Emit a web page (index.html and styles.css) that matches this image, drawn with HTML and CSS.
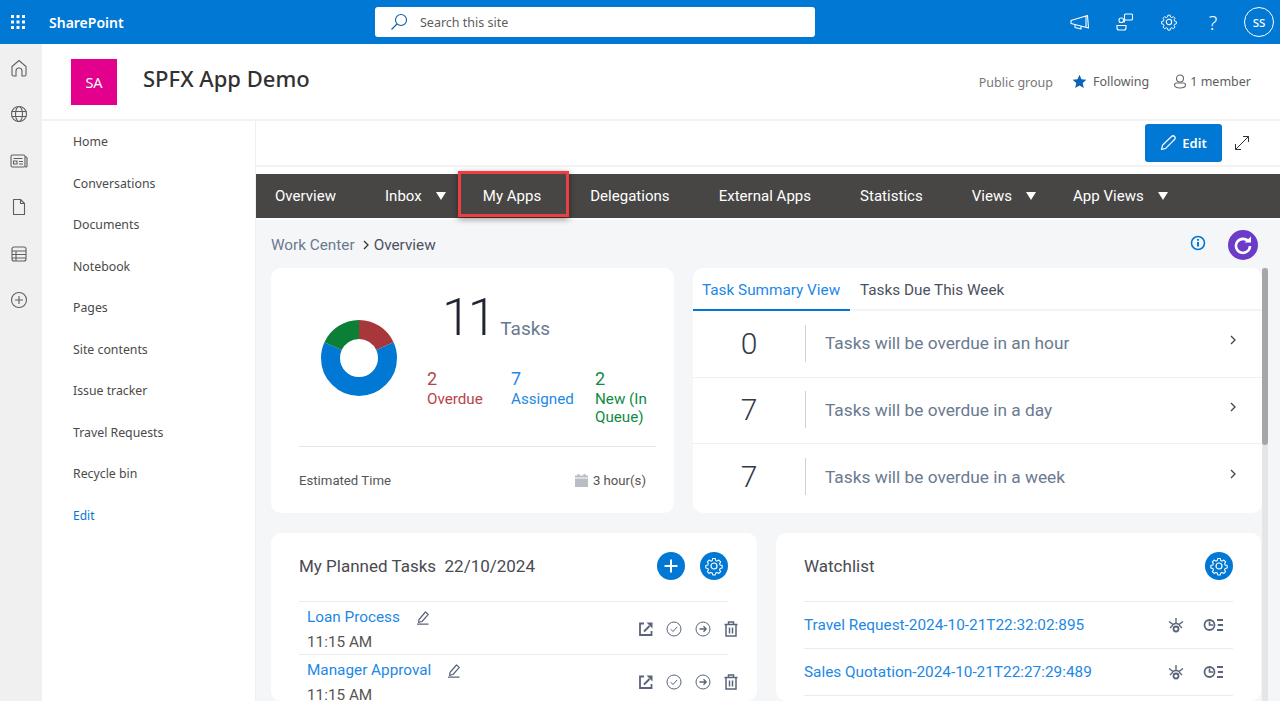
FILE: index.html
```html
<!DOCTYPE html>
<html lang="en">
<head>
<meta charset="utf-8">
<title>SPFX App Demo</title>
<link rel="stylesheet" href="styles.css">
</head>
<body>
<svg class="defs" width="0" height="0" aria-hidden="true">
  <symbol id="i-gear" viewBox="0 0 20 20"><path d="M8.600 1.600h2.800l.5 2.300 1.500.7 2-1.200 2 2-1.200 2 .6 1.500 2.300.6v2.800l-2.300.5-.6 1.500 1.200 2-2 2-2-1.200-1.500.6-.5 2.300H8.600l-.5-2.300-1.500-.6-2 1.200-2-2 1.200-2-.6-1.500-2.300-.5V9.500l2.300-.6.6-1.500-1.200-2 2-2 2 1.200 1.500-.7z" transform="translate(1 1) scale(.9)" fill="none" stroke="currentColor" stroke-width="1.200" stroke-linejoin="round"/><circle cx="10" cy="10" r="3" fill="none" stroke="currentColor" stroke-width="1.200"/></symbol>
  <symbol id="i-ext" viewBox="0 0 14 14"><path d="M5 1.500H1v11.500h11.500V9" fill="none" stroke="currentColor" stroke-width="1.800"/><path d="M5 9.500 10.500 4" fill="none" stroke="currentColor" stroke-width="2"/><path d="M7.500.5h6v6z" fill="currentColor"/></symbol>
  <symbol id="i-check" viewBox="0 0 16 16"><circle cx="8" cy="8" r="7" fill="none" stroke="currentColor"/><path d="m4.800 8.300 2.200 2.200 4.200-4.600" fill="none" stroke="currentColor"/></symbol>
  <symbol id="i-arrow" viewBox="0 0 16 16"><circle cx="8" cy="8" r="7" fill="none" stroke="currentColor"/><path d="M4.500 8h6.500M8.500 5.300 11.200 8l-2.700 2.700" fill="none" stroke="currentColor" stroke-width="1.300"/></symbol>
  <symbol id="i-trash" viewBox="0 0 14 16"><path d="M.5 3.500h13M4.500 3.300V1h5v2.300M2 4v11h10V4M5.500 6.500v6M8.500 6.500v6" fill="none" stroke="currentColor" stroke-width="1.500"/></symbol>
  <symbol id="i-pencil" viewBox="0 0 14 15"><path d="M3 9.500 9.500 2l2.800 2.400L6 11.500 2.600 12.300z" fill="none" stroke="currentColor" stroke-width="1.200" stroke-linejoin="round"/><path d="M1 14.200h11.500" stroke="currentColor" stroke-width="1.300"/></symbol>
  <symbol id="i-eye" viewBox="0 0 16 16"><path d="M1 4.500 5 7.500c2-1.300 4-1.300 6 0l4-3M8 1v5M2 11l3-3M14 11l-3-3" fill="none" stroke="currentColor" stroke-width="1.400"/><circle cx="8" cy="12" r="2.500" fill="none" stroke="currentColor" stroke-width="1.800"/></symbol>
  <symbol id="i-clock" viewBox="0 0 20 14"><circle cx="6.500" cy="7" r="5" fill="none" stroke="currentColor" stroke-width="1.800"/><path d="M6.500 3.500V7h3.500" fill="none" stroke="currentColor" stroke-width="1.600"/><path d="M14 2h6M14.800 7H20M14 12h6" stroke="currentColor" stroke-width="1.800"/></symbol>
  <symbol id="i-chev" viewBox="0 0 8 12"><path d="m2 2 4 4-4 4" fill="none" stroke="currentColor" stroke-width="1.300"/></symbol>
</svg>

<header class="topbar">
  <div class="brand">
    <svg class="waffle" width="16" height="16" viewBox="0 0 16 16" fill="#fff"><rect x="1" y="1" width="3" height="3"/><rect x="6.500" y="1" width="3" height="3"/><rect x="12" y="1" width="3" height="3"/><rect x="1" y="6.500" width="3" height="3"/><rect x="6.500" y="6.500" width="3" height="3"/><rect x="12" y="6.500" width="3" height="3"/><rect x="1" y="12" width="3" height="3"/><rect x="6.500" y="12" width="3" height="3"/><rect x="12" y="12" width="3" height="3"/></svg>
    <span class="brand-name">SharePoint</span>
  </div>
  <div class="search">
    <svg width="18" height="18" viewBox="0 0 18 18" fill="none" stroke="#0b5cab" stroke-width="1.100"><circle cx="11" cy="7" r="5.500"/><path d="M7 11 1.500 16.500"/></svg>
    <span>Search this site</span>
  </div>
  <div class="top-actions">
    <svg width="20" height="18" viewBox="0 0 20 18" fill="none" stroke="#fff" stroke-width="1.100" stroke-linejoin="round"><path d="M1 7.500 17.500 2.500 18.500 15 1 10.500zM16 3v11.500M5 12v2.500l6 1.500v-2.500"/></svg>
    <svg width="18" height="18" viewBox="0 0 18 18" fill="none" stroke="#fff" stroke-width="1.100"><rect x="8.500" y="1" width="8" height="6" rx="1"/><rect x="3" y="5" width="4.500" height="4.500" rx="2"/><path d="M1 12.500h9v2.500a2 2 0 0 1-2 2H3a2 2 0 0 1-2-2z"/><path d="M8.500 7v2.500"/></svg>
    <svg class="top-gear" width="18" height="18"><use href="#i-gear"/></svg>
    <span class="help">?</span>
    <span class="avatar">SS</span>
  </div>
</header>

<div class="shell">
  <aside class="rail">
    <svg width="18" height="18" viewBox="0 0 18 18"><path d="M9 1.500 2 7.500v8a1.500 1.500 0 0 0 1.500 1.500H6v-5a3 3 0 0 1 6 0v5h2.500a1.500 1.500 0 0 0 1.500-1.500v-8z"/></svg>
    <svg width="18" height="18" viewBox="0 0 18 18"><circle cx="9" cy="9" r="7.500"/><ellipse cx="9" cy="9" rx="3.500" ry="7.500"/><path d="M1.500 6.500h15M1.500 11.500h15"/></svg>
    <svg width="18" height="18" viewBox="0 0 18 18"><rect x="1" y="3" width="14" height="12" rx="1.500"/><path d="M15 5h1a1 1 0 0 1 1 1v8a1 1 0 0 1-1 1h-1M3.500 6.500h9M3.500 9h3.500v3H3.500zM9 9.500h4M9 12h4"/></svg>
    <svg width="18" height="18" viewBox="0 0 18 18"><path d="M3.500 1.500h7l4 4v11h-11z" stroke-linejoin="round"/><path d="M10.500 1.500v4h4"/></svg>
    <svg width="18" height="18" viewBox="0 0 18 18"><rect x="2" y="2" width="14" height="14" rx="2"/><path d="M2 6h14M2 9.500h14M2 13h14M6 6v10"/></svg>
    <svg width="18" height="18" viewBox="0 0 18 18"><circle cx="9" cy="9" r="7.500"/><path d="M9 5v8M5 9h8"/></svg>
  </aside>

  <div class="site">
    <section class="site-head">
      <div class="site-logo">SA</div>
      <h1 class="site-title">SPFX App Demo</h1>
      <div class="site-meta">
        <span class="meta-group">Public group</span>
        <span class="meta-item"><svg width="15" height="15" viewBox="0 0 15 15" fill="#0b63b8"><path d="M7.500.8l2 4.500 4.900.5-3.700 3.300 1.100 4.800-4.300-2.500-4.300 2.500 1.100-4.800L.6 5.800l4.900-.5z"/></svg>Following</span>
        <span class="meta-item member"><svg width="14" height="15" viewBox="0 0 14 15" fill="none" stroke="#666" stroke-width="1.100"><circle cx="7" cy="4.500" r="3.500"/><path d="M1.500 11a2 2 0 0 1 2-2h7a2 2 0 0 1 2 2c0 2-2.500 3-5.500 3s-5.500-1-5.500-3z"/></svg>1 member</span>
      </div>
    </section>

    <div class="site-body">
      <nav class="side-nav">
        <a>Home</a><a>Conversations</a><a>Documents</a><a>Notebook</a><a>Pages</a><a>Site contents</a><a>Issue tracker</a><a>Travel Requests</a><a>Recycle bin</a><a class="side-edit">Edit</a>
      </nav>

      <main class="page">
        <div class="command-bar">
          <button class="edit-btn"><svg width="16" height="16" viewBox="0 0 16 16" fill="none" stroke="#fff" stroke-width="1.200" stroke-linejoin="round"><path d="M1.500 14.500l1-4.200L11.500 1.500a2 2 0 0 1 3 3L5.700 13.400z"/></svg>Edit</button>
          <svg class="expand" width="16" height="16" viewBox="0 0 16 16" fill="none" stroke="#333" stroke-width="1"><path d="M1.500 14.500l13-13M9 1.500h5.500V7M1.500 9v5.500H7"/></svg>
        </div>

        <div class="app-nav-wrap">
          <nav class="app-nav">
            <a>Overview</a>
            <a class="has-caret">Inbox</a>
            <a>My Apps</a>
            <a>Delegations</a>
            <a>External Apps</a>
            <a>Statistics</a>
            <a class="has-caret">Views</a>
            <a class="has-caret">App Views</a>
          </nav>
          <div class="highlight"></div>
        </div>

        <div class="dash">
          <div class="crumb-row">
            <div class="crumbs"><span class="crumb-a">Work Center</span><svg width="8" height="12"><use href="#i-chev"/></svg><span class="crumb-b">Overview</span></div>
            <svg class="info" width="16" height="16" viewBox="0 0 16 16" fill="none" stroke="#0078d4" stroke-width="1.600"><circle cx="8" cy="8" r="6.500"/><path d="M8 7v4.500" stroke-width="2"/><path d="M8 4v1.800" stroke-width="2"/></svg>
            <span class="refresh"><svg width="20" height="20" viewBox="0 0 20 20" fill="none" stroke="#fff" stroke-width="2.600"><path d="M15.500 6.500A7 7 0 1 0 17 11"/><path d="M11.500 7.500h6.500V1.500z" fill="#fff" stroke="none"/></svg></span>
          </div>

          <div class="dash-scroll">
            <div class="cards">
              <div class="card-row top-row">
                <section class="card summary">
                  <div class="summary-top">
                    <svg class="donut" width="76" height="76" viewBox="0 0 76 76" fill="none" stroke-width="19">
                      <g transform="rotate(-90 38 38)">
                        <circle cx="38" cy="38" r="28.500" pathLength="11" stroke="#a8373c" stroke-dasharray="2 9"/>
                        <circle cx="38" cy="38" r="28.500" pathLength="11" stroke="#0078d4" stroke-dasharray="7 4" stroke-dashoffset="-2"/>
                        <circle cx="38" cy="38" r="28.500" pathLength="11" stroke="#0b7f35" stroke-dasharray="2 9" stroke-dashoffset="-9"/>
                      </g>
                    </svg>
                    <div class="summary-data">
                      <div class="total"><span class="total-n">11</span><span class="total-l">Tasks</span></div>
                      <div class="stats">
                        <div class="stat red"><b>2</b><span>Overdue</span></div>
                        <div class="stat blue"><b>7</b><span>Assigned</span></div>
                        <div class="stat green"><b>2</b><span>New (In Queue)</span></div>
                      </div>
                    </div>
                  </div>
                  <div class="summary-foot">
                    <span>Estimated Time</span>
                    <span class="hours"><svg width="13" height="13" viewBox="0 0 13 13" fill="#b9bdc6"><path d="M0 4.500h13V13H0zM0 1.500h13v2H0zM2.500 0h2v2h-2zM8.500 0h2v2h-2z"/></svg>3 hour(s)</span>
                  </div>
                </section>

                <section class="card tabs">
                  <div class="tab-strip"><span class="tab active">Task Summary View</span><span class="tab">Tasks Due This Week</span></div>
                  <div class="due"><span class="due-n">0</span><span class="due-t">Tasks will be overdue in an hour</span><svg width="8" height="12"><use href="#i-chev"/></svg></div>
                  <div class="due"><span class="due-n">7</span><span class="due-t">Tasks will be overdue in a day</span><svg width="8" height="12"><use href="#i-chev"/></svg></div>
                  <div class="due"><span class="due-n">7</span><span class="due-t">Tasks will be overdue in a week</span><svg width="8" height="12"><use href="#i-chev"/></svg></div>
                </section>
              </div>

              <div class="card-row bottom-row">
                <section class="card list planned">
                  <div class="list-head">
                    <h2>My Planned Tasks&nbsp; 22/10/2024</h2>
                    <span class="round"><svg width="16" height="16" viewBox="0 0 16 16" stroke="#fff" stroke-width="2"><path d="M8 1.500v13M1.500 8h13"/></svg></span>
                    <span class="round"><svg width="20" height="20"><use href="#i-gear"/></svg></span>
                  </div>
                  <div class="task">
                    <div class="task-main">
                      <div class="task-name"><a>Loan Process</a><svg width="14" height="15"><use href="#i-pencil"/></svg></div>
                      <div class="task-time">11:15 AM</div>
                    </div>
                    <div class="task-acts">
                      <svg width="14" height="14"><use href="#i-ext"/></svg><svg width="16" height="16"><use href="#i-check"/></svg><svg width="16" height="16"><use href="#i-arrow"/></svg><svg width="14" height="16"><use href="#i-trash"/></svg>
                    </div>
                  </div>
                  <div class="task">
                    <div class="task-main">
                      <div class="task-name"><a>Manager Approval</a><svg width="14" height="15"><use href="#i-pencil"/></svg></div>
                      <div class="task-time">11:15 AM</div>
                    </div>
                    <div class="task-acts">
                      <svg width="14" height="14"><use href="#i-ext"/></svg><svg width="16" height="16"><use href="#i-check"/></svg><svg width="16" height="16"><use href="#i-arrow"/></svg><svg width="14" height="16"><use href="#i-trash"/></svg>
                    </div>
                  </div>
                </section>

                <section class="card list">
                  <div class="list-head">
                    <h2>Watchlist</h2>
                    <span class="round"><svg width="20" height="20"><use href="#i-gear"/></svg></span>
                  </div>
                  <div class="watch"><a>Travel Request-2024-10-21T22:32:02:895</a><svg width="16" height="16"><use href="#i-eye"/></svg><svg width="20" height="14"><use href="#i-clock"/></svg></div>
                  <div class="watch"><a>Sales Quotation-2024-10-21T22:27:29:489</a><svg width="16" height="16"><use href="#i-eye"/></svg><svg width="20" height="14"><use href="#i-clock"/></svg></div>
                </section>
              </div>
            </div>
            <div class="scrollbar"><div class="thumb"></div></div>
          </div>
        </div>
      </main>
    </div>
  </div>
</div>
</body>
</html>
```
FILE: styles.css
```css
* { box-sizing: border-box; }
html, body { margin: 0; height: 701px; overflow: hidden; }
body { font-family: "Noto Sans", "Open Sans", sans-serif; color: #323130; background: #fff; }
a { text-decoration: none; }
.defs { position: absolute; }

.topbar { height: 44px; background: #0078d4; color: #fff; display: flex; align-items: center; }
.brand { width: 375px; display: flex; align-items: center; flex: none; }
.waffle { margin-left: 10px; }
.brand-name { margin-left: 23px; font-size: 14px; font-weight: 600; }
.search { width: 440px; height: 30px; background: #fff; border-radius: 3px; display: flex; align-items: center; padding-left: 15px; gap: 12px; font-size: 12.5px; color: #605e5c; flex: none; }
.top-actions { margin-left: auto; display: flex; align-items: center; padding-right: 6px; gap: 26px; }
.top-gear { color: #fff; }
.help { font-size: 20px; width: 18px; text-align: center; font-weight: 300; }
.avatar { width: 30px; height: 30px; border: 1px solid #fff; border-radius: 50%; font-size: 11.5px; font-weight: 500; display: flex; align-items: center; justify-content: center; margin-left: -4px; }

.shell { display: flex; height: 657px; overflow: hidden; }
.rail { width: 42px; flex: none; background: #f0f0f0; display: flex; flex-direction: column; align-items: center; padding: 15px 5px 0 0; gap: 28.4px; }
.rail svg { fill: none; stroke: #5f5f5f; stroke-width: 1.1; flex: none; }

.site { flex: 1; min-width: 0; display: flex; flex-direction: column; }
.site-head { height: 77px; flex: none; border-bottom: 2px solid #f2f2f2; display: flex; align-items: flex-start; padding: 15px 29px 0 29px; }
.site-logo { width: 46px; height: 46px; background: #e3008c; color: #fff; font-size: 14.5px; display: flex; align-items: center; justify-content: center; flex: none; }
.site-title { margin: 2px 0 0 26px; font-size: 22px; font-weight: 500; line-height: 34px; color: #323130; }
.site-meta { margin-left: auto; display: flex; align-items: center; font-size: 12.5px; color: #605e5c; height: 44px; gap: 19px; }
.meta-group { color: #767676; padding-top: 3px; }
.meta-item { display: flex; align-items: center; gap: 6px; }
.member { gap: 3px; margin-left: 5px; }

.site-body { flex: 1; display: flex; min-height: 0; }
.side-nav { width: 214px; flex: none; border-right: 1px solid #efefef; padding: 0 0 0 31px; display: flex; flex-direction: column; font-size: 12.3px; color: #4a4a4a; }
.side-nav a { height: 41.5px; display: flex; align-items: center; }
.side-nav .side-edit { color: #0078d4; font-size: 12px; }

.page { flex: 1; min-width: 0; background: #fff; display: flex; flex-direction: column; font-family: Roboto, sans-serif; }
.command-bar { height: 46px; flex: none; border-bottom: 2px solid #f3f3f3; display: flex; align-items: center; justify-content: flex-end; padding: 0 30px 0 0; gap: 12px; }
.edit-btn { width: 77px; height: 38px; background: #0078d4; color: #fff; border: 0; border-radius: 3px; font: 600 13px "Noto Sans", sans-serif; display: flex; align-items: center; justify-content: center; gap: 6px; padding: 0; }
.expand { flex: none; }

.app-nav-wrap { position: relative; margin-top: 7px; flex: none; border-bottom: 2px solid #fff; }
.app-nav { height: 44px; background: #484644; display: flex; align-items: center; color: #fff; font-size: 15px; letter-spacing: .025px; padding-left: 19px; }
.app-nav a { margin-right: 49px; white-space: nowrap; display: flex; align-items: center; }
.app-nav .has-caret { margin-right: 37px; }
.app-nav .has-caret::after { content: ""; margin-left: 14px; border-left: 5px solid transparent; border-right: 5px solid transparent; border-top: 8px solid #fff; }
.highlight { position: absolute; left: 202px; top: -3px; width: 111px; height: 46px; border: 3px solid #ef3e42; box-shadow: 0 2px 6px rgba(0,0,0,.45); pointer-events: none; }

.dash { flex: 1; min-height: 0; background: #f5f6f8; padding-left: 15px; display: flex; flex-direction: column; }
.crumb-row { height: 48px; flex: none; display: flex; align-items: center; padding: 2px 22px 0 0; }
.crumbs { display: flex; align-items: center; font-size: 15.3px; margin-right: auto; }
.crumb-a { color: #6b7a90; }
.crumbs svg { margin: 0 4px 0 7px; color: #333; }
.crumb-b { color: #4a5160; }
.info { margin-right: 22px; margin-top: -5px; }
.refresh { width: 30px; height: 30px; border-radius: 50%; background: #6c3cc9; display: flex; align-items: center; justify-content: center; }

.dash-scroll { flex: 1; min-height: 0; display: flex; align-items: stretch; overflow: hidden; }
.cards { width: 991px; flex: none; display: flex; flex-direction: column; gap: 20px; min-height: 0; }
.card-row { display: grid; column-gap: 19px; }
.top-row { grid-template-columns: 403px 569px; height: 245px; flex: none; }
.bottom-row { grid-template-columns: 486px 485px; flex: 1; min-height: 0; overflow: hidden; }
.scrollbar { width: 6px; flex: none; background: #e6e6e6; }
.thumb { height: 177px; background: #a6a6a6; border-radius: 3px; }

.card { background: #fff; border-radius: 10px; min-width: 0; }
.summary { padding: 0 18px 0 28px; display: flex; flex-direction: column; }
.summary-top { height: 179px; flex: none; border-bottom: 1px solid #e8e8e8; display: flex; }
.donut { margin: 52px 0 0 22px; flex: none; }
.summary-data { margin-left: 30px; width: 231px; }
.total { display: flex; align-items: baseline; padding: 15px 0 0 15px; height: 96px; }
.total-n { font-size: 52px; font-weight: 350; color: #1f2430; line-height: 70px; letter-spacing: -3px; }
.total-l { font-size: 19px; color: #6b7a90; margin-left: 6.6px; }
.stats { display: flex; margin-top: 4px; }
.stat { display: flex; flex-direction: column; width: 84px; font-size: 15.2px; line-height: 18px; }
.stat:last-child { width: 60px; }
.stat b { font-weight: 400; font-size: 18px; line-height: 21px; margin-bottom: 1px; }
.red { color: #b5434a; }
.blue { color: #1e88e5; }
.green { color: #0f8a45; }
.summary-foot { flex: 1; display: flex; justify-content: space-between; align-items: center; font-size: 13.2px; color: #555; padding: 0 10px 0 0; }
.hours { display: flex; align-items: center; gap: 5px; }

.tab-strip { height: 43px; border-bottom: 2px solid #f3f4f6; display: flex; font-size: 15.3px; color: #4a5160; white-space: nowrap; }
.tab { padding: 0 10px; line-height: 44px; }
.tab.active { padding: 0 9px; color: #1e88e5; box-shadow: inset 0 -2px 0 #0078d4; height: 43px; width: 157px; }
.due { height: 66.5px; display: flex; align-items: center; border-bottom: 1px solid #f0f1f3; padding-bottom: 1px; }
.due:last-child { border-bottom: 0; }
.due-n { width: 113px; height: 37px; border-right: 1px solid #cdd2d9; text-align: center; font-size: 30px; font-weight: 300; line-height: 37px; color: #323a4a; flex: none; }
.due-t { margin-left: 19px; font-size: 17.3px; color: #6b7a90; flex: 1; }
.due svg { margin: -6px 25px 0 0; color: #444; }

.list { padding: 0 28px; overflow: hidden; }
.planned { padding-right: 29px; }
.list-head { height: 69px; display: flex; align-items: center; gap: 15px; border-bottom: 1px solid #ebebeb; padding-bottom: 3px; }
.list-head h2 { margin: 0 auto 0 0; font-size: 17px; font-weight: 400; color: #4a4a52; }
.round { width: 28px; height: 28px; border-radius: 50%; background: #0078d4; color: #fff; display: flex; align-items: center; justify-content: center; flex: none; }
.task { height: 53px; display: flex; border-bottom: 1px solid #ebebeb; padding-left: 8px; }
.task-main { flex: 1; padding-top: 6px; font-size: 15.3px; line-height: 18px; }
.task-name { display: flex; align-items: center; gap: 16px; }
.task-name a { color: #1e88e5; }
.task-name svg { color: #5a6478; }
.task-time { margin-top: 7px; color: #555; }
.task-acts { display: flex; align-items: center; gap: 13px; color: #5a6478; margin-right: -10px; padding-top: 1px; }
.watch { height: 47px; display: flex; align-items: center; border-bottom: 1px solid #ebebeb; color: #5a6478; }
.watch a { color: #1e88e5; font-size: 15.35px; margin-right: auto; }
.watch svg + svg { margin: 0 10px 0 19px; }
```
